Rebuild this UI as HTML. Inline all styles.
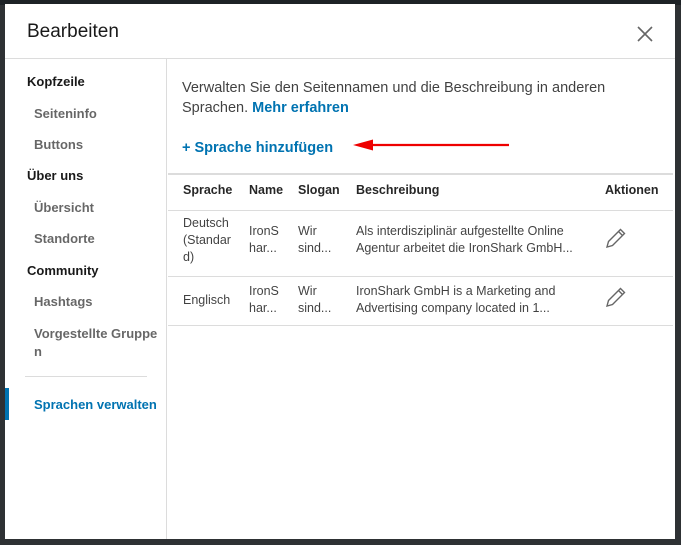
<!DOCTYPE html>
<html><head><meta charset="utf-8"><style>
*{margin:0;padding:0;box-sizing:border-box}
body{width:681px;height:545px;background:#2e3134;font-family:"Liberation Sans",sans-serif;position:relative;overflow:hidden}
.bgtop{position:absolute;left:0;top:0;width:681px;height:5px;background:#1d2226}
.modal{position:absolute;left:5px;top:4px;width:670px;height:535px;background:#fff}
.hdr{position:absolute;left:0;top:0;width:670px;height:55px;border-bottom:1px solid #dcdcdc}
.hdr h1{position:absolute;left:22px;top:17px;font-size:19px;font-weight:normal;color:rgba(0,0,0,.9)}
.side{position:absolute;left:0;top:55px;width:162px;height:480px;border-right:1px solid #dcdcdc}
.s{position:absolute;font-size:13px;white-space:nowrap}
.h{left:22px;color:rgba(0,0,0,.9);font-weight:bold}
.i{left:29px;color:rgba(0,0,0,.6);font-weight:bold}
.main{position:absolute;left:163px;top:55px;width:507px;height:480px}
.t{position:absolute;font-size:14.5px;color:rgba(0,0,0,.75);line-height:20px}
.blue{color:#0073b1;font-weight:bold}
.line{position:absolute;left:0;width:505px;height:1px;background:#dcdcdc}
.c{position:absolute;font-size:12.5px;color:rgba(0,0,0,.75);line-height:17px}
.th{position:absolute;font-size:12.5px;font-weight:bold;color:rgba(0,0,0,.85)}
</style></head><body>
<div class="bgtop"></div>
<div class="modal">
 <div class="hdr"><h1>Bearbeiten</h1>
  <svg style="position:absolute;left:631px;top:21px" width="18" height="18"><path d="M2 2L16 16M16 2L2 16" stroke="#666" stroke-width="1.6"/></svg>
 </div>
 <div class="side">
  <div class="s h" style="top:15px">Kopfzeile</div>
  <div class="s i" style="top:47px">Seiteninfo</div>
  <div class="s i" style="top:78px">Buttons</div>
  <div class="s h" style="top:109px">Über uns</div>
  <div class="s i" style="top:141px">Übersicht</div>
  <div class="s i" style="top:172px">Standorte</div>
  <div class="s h" style="top:204px">Community</div>
  <div class="s i" style="top:235px">Hashtags</div>
  <div class="s i" style="top:266px;line-height:18px">Vorgestellte Gruppe<br>n</div>
  <div style="position:absolute;left:20px;top:317px;width:122px;height:1px;background:#dcdcdc"></div>
  <div style="position:absolute;left:0;top:329px;width:4px;height:32px;background:#0073b1"></div>
  <div class="s" style="left:29px;top:338px;color:#0073b1;font-weight:bold">Sprachen verwalten</div>
 </div>
 <div class="main">
  <div class="t" style="left:14px;top:19px;width:450px">Verwalten Sie den Seitennamen und die Beschreibung in anderen Sprachen. <span class="blue">Mehr erfahren</span></div>
  <div class="t blue" style="left:14px;top:79px">+ Sprache hinzufügen</div>
  <svg style="position:absolute;left:185px;top:78px" width="160" height="16"><path d="M16 8H156" stroke="#e00" stroke-width="2.2"/><path d="M0 8L20 2.5L20 13.5Z" fill="#e00"/></svg>
  <div class="line" style="top:114px;height:2px"></div>
  <div class="th" style="left:15px;top:124px">Sprache</div>
  <div class="th" style="left:81px;top:124px">Name</div>
  <div class="th" style="left:130px;top:124px">Slogan</div>
  <div class="th" style="left:188px;top:124px">Beschreibung</div>
  <div class="th" style="left:437px;top:124px">Aktionen</div>
  <div class="line" style="top:151px"></div>
  <div class="c" style="left:15px;top:156px">Deutsch<br>(Standar<br>d)</div>
  <div class="c" style="left:81px;top:164px">IronS<br>har...</div>
  <div class="c" style="left:130px;top:164px">Wir<br>sind...</div>
  <div class="c" style="left:188px;top:164px">Als interdisziplinär aufgestellte Online<br>Agentur arbeitet die IronShark GmbH...</div>
  <svg style="position:absolute;left:437px;top:168px" width="22" height="22"><path d="M2 20L3.5 14.5L15.5 2.5L19.5 6.5L7.5 18.5Z M13.5 4.5L17.5 8.5" fill="none" stroke="#666" stroke-width="1.4"/></svg>
  <div class="line" style="top:217px"></div>
  <div class="c" style="left:15px;top:233px">Englisch</div>
  <div class="c" style="left:81px;top:224px">IronS<br>har...</div>
  <div class="c" style="left:130px;top:224px">Wir<br>sind...</div>
  <div class="c" style="left:188px;top:224px">IronShark GmbH is a Marketing and<br>Advertising company located in 1...</div>
  <svg style="position:absolute;left:437px;top:227px" width="22" height="22"><path d="M2 20L3.5 14.5L15.5 2.5L19.5 6.5L7.5 18.5Z M13.5 4.5L17.5 8.5" fill="none" stroke="#666" stroke-width="1.4"/></svg>
  <div class="line" style="top:266px"></div>
 </div>
</div>
</body></html>
